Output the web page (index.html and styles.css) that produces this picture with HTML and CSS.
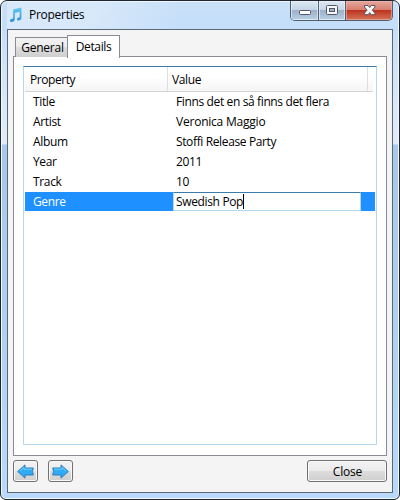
FILE: index.html
```html
<!DOCTYPE html>
<html lang="en">
<head>
<meta charset="utf-8">
<title>Properties</title>
<link rel="stylesheet" href="styles.css">
</head>
<body>
<div class="window">
  <header class="titlebar">
    <svg class="note" width="14" height="16" viewBox="0 0 14 16">
      <defs><linearGradient id="blue" x1="0" y1="0" x2="0" y2="1"><stop offset="0" stop-color="#62c9f3"/><stop offset="1" stop-color="#2a8fd5"/></linearGradient></defs>
      <path d="M4.2 2.6 12.4.6V11.2Q12.2 13.2 10 13.6 7.7 13.7 7.8 12.2 8.1 10.3 10.6 10.2V4.7L5.8 5.9V12.8Q5.4 14.8 3 15.1 .8 15.1 .9 13.6 1.3 11.7 4.2 11.6Z" fill="url(#blue)"/>
    </svg>
    <h1 class="title">Properties</h1>
    <div class="controls">
      <span class="control minimize"><svg width="28" height="18" viewBox="0 0 28 18"><rect x="8.5" y="9.5" width="11" height="4" rx="1" fill="#fff" stroke="#535666"/></svg></span>
      <span class="control maximize"><svg width="26" height="18" viewBox="0 0 26 18"><rect x="7.5" y="4.5" width="11" height="9" rx="1" fill="#f7f7f7" stroke="#535666"/><rect x="10.5" y="7.5" width="5" height="3" fill="#9eb7d1" stroke="#535666"/></svg></span>
      <span class="control exit"><svg width="46" height="18" viewBox="0 0 46 18"><path d="M18.5 4.5h3.6l1.6 2 1.6-2h3.6v1.6l-2.6 3 2.6 3v1.6h-3.6l-1.6-2-1.6 2h-3.6v-1.6l2.6-3-2.6-3z" fill="#f5f5f5" stroke="#535666"/></svg></span>
    </div>
  </header>
  <main class="client">
    <nav class="tabs">
      <span class="tab general">General</span>
      <span class="tab active">Details</span>
    </nav>
    <section class="panel">
      <div class="list">
        <div class="head"><span class="head-name">Property</span><span class="head-value">Value</span></div>
        <div class="row"><span class="name">Title</span><span class="value">Finns det en så finns det flera</span></div>
        <div class="row"><span class="name">Artist</span><span class="value artist">Veronica Maggio</span></div>
        <div class="row"><span class="name">Album</span><span class="value">Stoffi Release Party</span></div>
        <div class="row"><span class="name">Year</span><span class="value">2011</span></div>
        <div class="row"><span class="name">Track</span><span class="value">10</span></div>
        <div class="row selected"><span class="name">Genre</span><span class="edit">Swedish Pop<i class="caret"></i></span></div>
      </div>
    </section>
    <footer class="footer">
      <span class="button arrow"><svg width="17" height="15" viewBox="0 0 17 15"><path d="M.7 7.5 8 .9V4h8.3l-.8 3.5.8 3.5H8v3.1z" fill="#2fabf5" stroke="#2a7fbd"/><path d="M3 7.1 7 3.4v1.8h8" fill="none" stroke="#72d0ff"/></svg></span>
      <span class="button arrow"><svg width="17" height="15" viewBox="0 0 17 15"><path d="M16.3 7.5 9 .9V4H.7l.8 3.5L.7 11H9v3.1z" fill="#2fabf5" stroke="#2a7fbd"/><path d="M14 7.1 10 3.4v1.8H2" fill="none" stroke="#72d0ff"/></svg></span>
      <span class="button close">Close</span>
    </footer>
  </main>
</div>
</body>
</html>
```
FILE: styles.css
```css
* { box-sizing: border-box; }
body {
  margin: 0;
  width: 400px;
  height: 500px;
  overflow: hidden;
  background: #fff;
  font: 12px/20px "Open Sans", "Noto Sans", sans-serif;
  letter-spacing: -0.35px;
  color: #000;
  white-space: nowrap;
}
.window {
  width: 400px;
  height: 500px;
  padding: 0 6px 6px;
  border: 1px solid #20242f;
  border-radius: 7px 7px 6px 6px;
  background: linear-gradient(#c9e0f8 0, #c4def9 28px, #d5e5f6 80px, #e2ecf6 143px, #a9c8e8 144px, #b0cfee 300px, #b9dafb 100%);
  box-shadow: inset 0 0 0 1px #eef8ff;
}
.titlebar { display: flex; height: 28px; background: linear-gradient(100deg, #e6f1fb88 0, #e6f1fb88 22%, transparent 45%); }
.note { margin: 6px 0 0 2px; }
.title { margin: 4px 0 0 6px; font: inherit; font-size: 12px; letter-spacing: -0.28px; }
.controls {
  display: flex;
  width: 103px;
  height: 20px;
  margin: 0 0 0 auto;
  border: 1px solid #515e70;
  border-top: 0;
  border-radius: 0 0 5px 5px;
  overflow: hidden;
}
.control { height: 19px; background: linear-gradient(#dce8f3, #c6d6e6 45%, #9bb2ca 50%, #b9d0e5); box-shadow: inset 0 0 0 1px #edf5fbaa; }
.control svg { display: block; }
.minimize { width: 28px; border-right: 1px solid #515e70; }
.maximize { width: 27px; border-right: 1px solid #515e70; }
.exit { width: 46px; background: linear-gradient(#e6a99e, #d77f70 45%, #bd3420 50%, #d5725a); box-shadow: inset 0 0 0 1px #efb8ac99; }
.client { height: 464px; padding: 5px 5px 0; border: 1px solid #596978; background: #f4f4f4; }
.tabs { display: flex; align-items: flex-end; height: 22px; padding-left: 2px; position: relative; z-index: 1; }
.tab { border: 1px solid #898c95; border-bottom: 0; text-align: center; }
.general { width: 52px; height: 20px; padding-left: 2px; border-right: 0; letter-spacing: -0.25px; background: linear-gradient(#f2f2f2, #ebebeb 49%, #dddddd 50%, #cfcfcf); }
.active { width: 53px; height: 23px; margin-bottom: -1px; line-height: 22px; background: #fff; }
.panel { height: 400px; padding: 9px; margin-top: -1px; border: 1px solid #898c95; background: #fff; }
.list { width: 354px; height: 379px; padding: 0 1px; border: 1px solid #b4d7ed; border-top-color: #3d7bad; }
.head { display: flex; width: 348px; height: 25px; border-bottom: 1px solid #d5d5d5; background: linear-gradient(#fff 40%, #f5f5f5); line-height: 26px; }
.head-name { width: 143px; padding-left: 5px; border-right: 1px solid #dedede; letter-spacing: -0.45px; }
.head-value { width: 200px; padding-left: 4px; border-right: 1px solid #dedede; }
.row { display: flex; height: 20px; }
.name { width: 148px; padding-left: 8px; }
.value { padding-left: 3px; line-height: 19px; letter-spacing: -0.37px; }
.artist { letter-spacing: -0.22px; }
.selected { height: 19px; background: #1e90ff; color: #fff; line-height: 20px; }
.edit { display: flex; width: 188px; height: 19px; padding-left: 2px; border: 1px solid #b4d7ed; border-top-color: #3d7bad; border-radius: 1px; background: #fff; color: #000; line-height: 17px; }
.caret { width: 1px; height: 15px; margin-top: 1px; background: #000; }
.footer { display: flex; padding-top: 4px; }
.button { display: flex; align-items: center; justify-content: center; height: 22px; border: 1px solid #707070; border-radius: 3px; background: linear-gradient(#f2f2f2, #ebebeb 49%, #dddddd 50%, #cfcfcf); box-shadow: inset 0 0 0 1px #fafafa; }
.arrow { width: 25px; margin-right: 10px; }
.close { width: 80px; margin-left: auto; padding: 1px 0 0 1px; letter-spacing: -0.2px; }
```
